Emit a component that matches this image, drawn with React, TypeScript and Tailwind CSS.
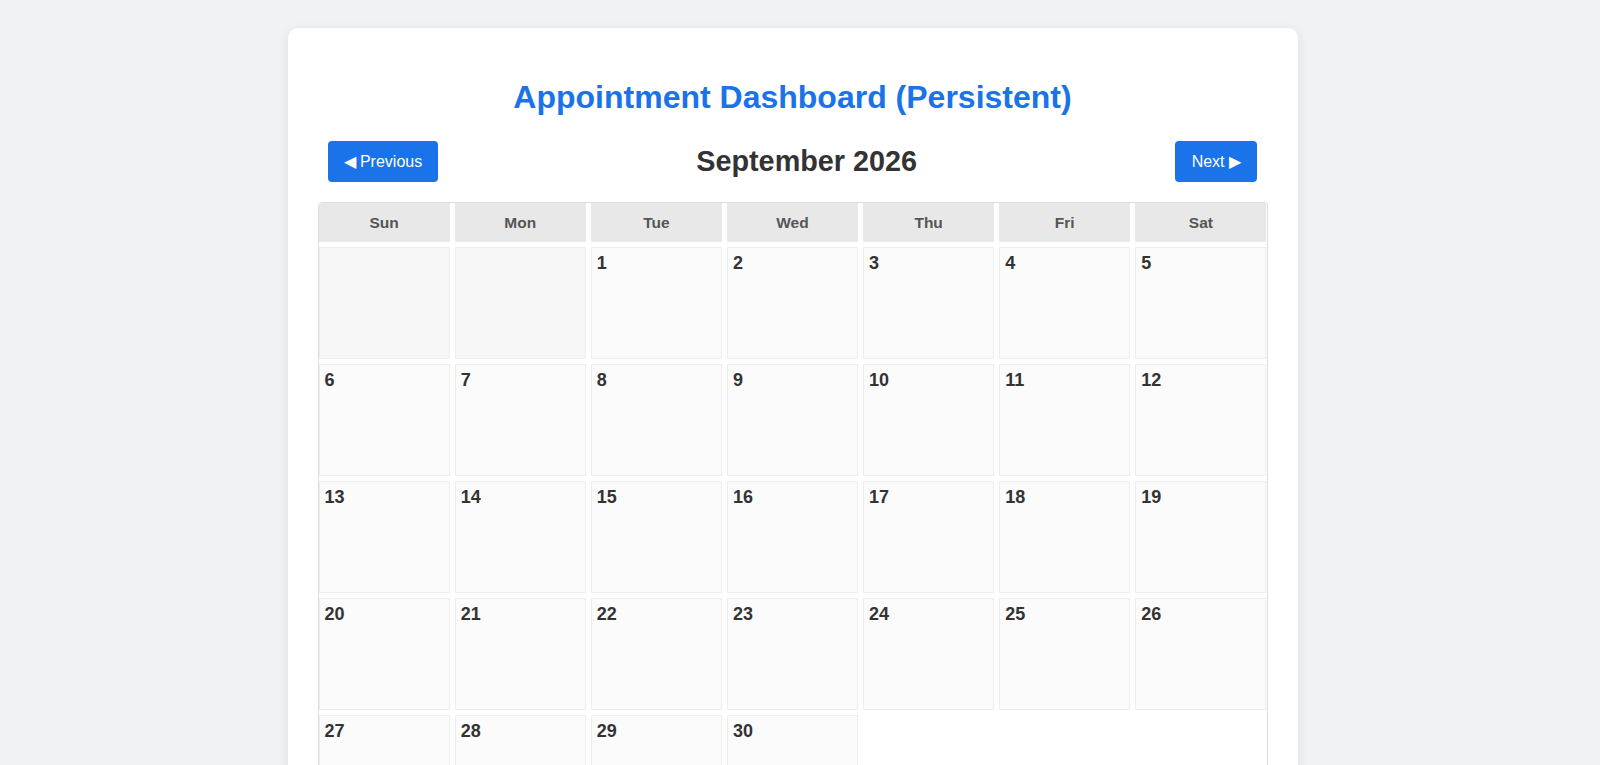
import React from 'react';

const DAYS = ['Sun', 'Mon', 'Tue', 'Wed', 'Thu', 'Fri', 'Sat'];

export default function App() {
  const year = 2026;
  const month = 8; // September
  const firstDay = new Date(year, month, 1).getDay();
  const daysInMonth = new Date(year, month + 1, 0).getDate();

  const cells: (number | null)[] = [];
  for (let i = 0; i < firstDay; i++) cells.push(null);
  for (let d = 1; d <= daysInMonth; d++) cells.push(d);

  return (
    <div className="h-screen overflow-y-scroll bg-[#f0f2f5] font-['Liberation_Sans',Arial,sans-serif]">
      <div className="pt-[28px] pr-[15px] pb-[28px]">
        <div className="mx-auto w-[1010px] rounded-[10px] bg-white p-[30px] shadow-[0_2px_12px_rgba(0,0,0,0.08)]">
          <h1 className="mt-[21px] mb-[25px] text-center text-[32px] font-bold leading-[37px] text-[#1a73e8]">
            Appointment Dashboard (Persistent)
          </h1>

          {/* Month navigation */}
          <div className="mb-[20px] flex items-center justify-between px-[10px]">
            <button className="flex h-[41px] items-center rounded-[4px] bg-[#1a73e8] px-[16px] text-[16px] text-white">
              ◀ Previous
            </button>
            <h2 className="text-[28.8px] font-bold leading-[33px] text-[#333]">September 2026</h2>
            <button className="flex h-[41px] items-center rounded-[4px] bg-[#1a73e8] px-[16.5px] text-[16px] text-white">
              Next ▶
            </button>
          </div>

          {/* Calendar */}
          <div className="grid grid-cols-7 gap-[5px] rounded-[4px] border border-[#ddd]">
            {DAYS.map((day) => (
              <div
                key={day}
                className="flex h-[39px] items-center justify-center bg-[#e8e8e8] text-[15.5px] font-bold text-[#555]"
              >
                {day}
              </div>
            ))}
            {cells.map((d, i) =>
              d === null ? (
                <div key={`e${i}`} className="min-h-[112px] border border-[#eee] bg-[#f7f7f7]" />
              ) : (
                <div key={d} className="min-h-[112px] border border-[#eee] bg-[#fbfbfb] p-[5px]">
                  <div className="text-[18px] font-bold leading-[21px] text-[#333]">{d}</div>
                </div>
              )
            )}
          </div>
        </div>
      </div>
    </div>
  );
}
